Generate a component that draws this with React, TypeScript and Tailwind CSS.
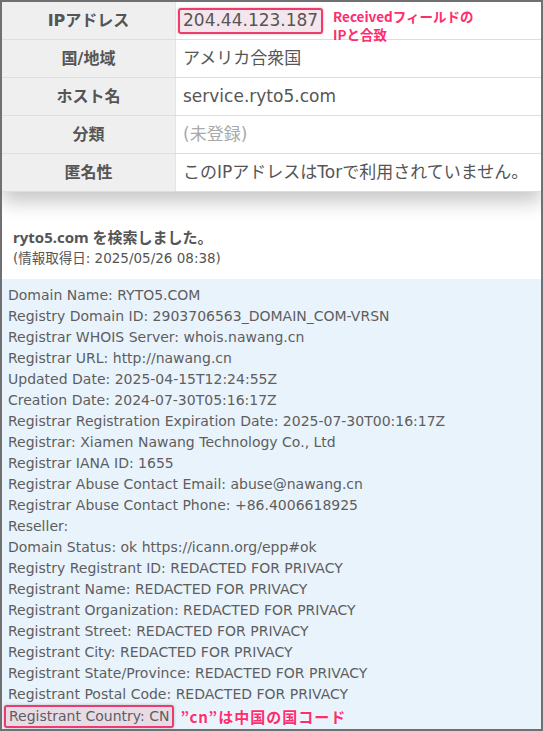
const rows: { label: string; value: string; muted?: boolean; ip?: boolean }[] = [
  { label: 'IPアドレス', value: '204.44.123.187', ip: true },
  { label: '国/地域', value: 'アメリカ合衆国' },
  { label: 'ホスト名', value: 'service.ryto5.com' },
  { label: '分類', value: '(未登録)', muted: true },
  { label: '匿名性', value: 'このIPアドレスはTorで利用されていません。' },
];

const whois = [
  'Domain Name: RYTO5.COM',
  'Registry Domain ID: 2903706563_DOMAIN_COM-VRSN',
  'Registrar WHOIS Server: whois.nawang.cn',
  'Registrar URL: http://nawang.cn',
  'Updated Date: 2025-04-15T12:24:55Z',
  'Creation Date: 2024-07-30T05:16:17Z',
  'Registrar Registration Expiration Date: 2025-07-30T00:16:17Z',
  'Registrar: Xiamen Nawang Technology Co., Ltd',
  'Registrar IANA ID: 1655',
  'Registrar Abuse Contact Email: abuse@nawang.cn',
  'Registrar Abuse Contact Phone: +86.4006618925',
  'Reseller:',
  'Domain Status: ok https://icann.org/epp#ok',
  'Registry Registrant ID: REDACTED FOR PRIVACY',
  'Registrant Name: REDACTED FOR PRIVACY',
  'Registrant Organization: REDACTED FOR PRIVACY',
  'Registrant Street: REDACTED FOR PRIVACY',
  'Registrant City: REDACTED FOR PRIVACY',
  'Registrant State/Province: REDACTED FOR PRIVACY',
  'Registrant Postal Code: REDACTED FOR PRIVACY',
];

const jp = "font-['DejaVu_Sans','Noto_Sans_CJK_JP',sans-serif]";
const note = "font-['Noto_Sans_CJK_JP',sans-serif] font-bold text-[#ff2d6f] [text-shadow:0_0_3px_#fff]";

export default function App() {
  return (
    <div className="w-[543px] h-[731px] overflow-hidden border-2 border-[#707070] bg-white flex flex-col">
      <div className={`relative shadow-[0_10px_18px_rgba(0,0,0,0.22)] ${jp}`}>
        {rows.map((r) => (
          <div key={r.label} className="flex h-[38px] border-b border-[#dedede] last:border-b-0">
            <div className="w-[173px] shrink-0 bg-[#efefef] flex items-center justify-center text-[16px] font-bold text-[#555]">
              {r.label}
            </div>
            <div className="flex-1 flex items-center pl-[7px] text-[17px] border-l border-[#e4e4e4] whitespace-nowrap">
              {r.ip ? (
                <span className="-ml-[5px] px-[3px] h-[26px] flex items-center rounded-[3px] border-2 border-[#ef3a6c] bg-[#f4e6ec] text-[#555] shadow-[0_0_3px_rgba(0,0,0,0.25)]">
                  {r.value}
                </span>
              ) : (
                <span className={r.muted ? 'text-[#a9a9a9]' : 'text-[#555]'}>{r.value}</span>
              )}
            </div>
          </div>
        ))}
        <div className={`absolute left-[331px] top-[5px] text-[13.5px] leading-[18px] ${note}`}>
          Receivedフィールドの
          <br />
          IPと合致
        </div>
      </div>

      <div className="pt-[35px] pl-[11px] pb-[12px]">
        <div className="font-['Noto_Sans','Noto_Sans_CJK_JP',sans-serif] text-[15px] font-bold text-[#555] leading-[20px]">
          ryto5.com を検索しました。
        </div>
        <div className={`${jp} text-[13.5px] text-[#555] leading-[18px] mt-[2px]`}>(情報取得日: 2025/05/26 08:38)</div>
      </div>

      <div className="flex-1 bg-[#e9f3fc] pt-[6px] px-[6px] font-['DejaVu_Sans',sans-serif] text-[14px] leading-[21px] text-[#5e5e5e]">
        {whois.map((l) => (
          <div key={l} className="whitespace-nowrap">{l}</div>
        ))}
        <div className="flex items-center">
          <span className="-ml-[4px] px-[3px] h-[23px] flex items-center rounded-[3px] border-2 border-[#ef3a6c] bg-[#e7dbe6] shadow-[0_0_3px_rgba(0,0,0,0.25)] whitespace-nowrap">
            Registrant Country: CN
          </span>
          <span className={`ml-[6px] text-[15px] tracking-[1px] ${note}`}>”cn”は中国の国コード</span>
        </div>
      </div>
    </div>
  );
}
